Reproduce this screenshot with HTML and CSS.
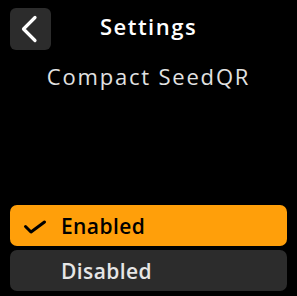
FILE: index.html
```html
<!DOCTYPE html>
<html lang="en">
<head>
  <meta charset="UTF-8">
  <title>Settings</title>
  <link rel="stylesheet" href="styles.css">
</head>
<body>
  <div class="screen">
    <header class="top-nav">
      <button class="back-btn" aria-label="Back">
        <svg width="41" height="42" viewBox="0 0 41 42">
          <path d="M25 9.5 L13.5 21 L25 32.5" fill="none" stroke="#fff" stroke-width="3.2" stroke-linecap="round" stroke-linejoin="round"/>
        </svg>
      </button>
      <h1>Settings</h1>
    </header>

    <div class="setting-name">Compact SeedQR</div>

    <div class="options">
      <div class="option selected">
        <span class="check">
          <svg width="51" height="41" viewBox="0 0 51 41">
            <path d="M15.5 21.5 L21 27 L34.5 17" fill="none" stroke="#000" stroke-width="3" stroke-linecap="round" stroke-linejoin="round"/>
          </svg>
        </span>
        <span class="label">Enabled</span>
      </div>
      <div class="option">
        <span class="check"></span>
        <span class="label">Disabled</span>
      </div>
    </div>
  </div>
</body>
</html>
```

FILE: styles.css
```css
body {
  margin: 0;
  background-color: #000;
  font-family: "Open Sans", sans-serif;
  color: #fff;
}
.screen {
  width: 297px;
  height: 296px;
  display: flex;
  flex-direction: column;
}
.top-nav {
  position: relative;
  height: 42px;
  margin-top: 8px;
  display: flex;
  align-items: center;
  justify-content: center;
}
.back-btn {
  position: absolute;
  left: 10px;
  top: 0;
  width: 41px;
  height: 42px;
  background-color: #2c2c2c;
  border: none;
  border-radius: 6px;
  padding: 0;
}
.back-btn svg {
  display: block;
}
.top-nav h1 {
  margin: 0;
  margin-top: -6px;
  font-size: 22px;
  font-weight: 600;
  letter-spacing: 1.5px;
  color: #fff;
}
.setting-name {
  margin-top: 11px;
  text-align: center;
  font-size: 22px;
  letter-spacing: 1.8px;
  color: #e2e2e2;
}
.options {
  margin-top: auto;
  margin-bottom: 5px;
  padding: 0 10px;
  display: flex;
  flex-direction: column;
  gap: 4px;
}
.option {
  height: 41px;
  border-radius: 7px;
  background-color: #2c2c2c;
  display: flex;
  align-items: center;
  font-size: 21px;
  font-weight: 600;
  letter-spacing: 0.4px;
  color: #e6e6e6;
}
.option.selected {
  background-color: #ff9f0a;
  color: #000;
}
.check {
  width: 51px;
  height: 41px;
  flex-shrink: 0;
}
.check svg {
  display: block;
}
```
